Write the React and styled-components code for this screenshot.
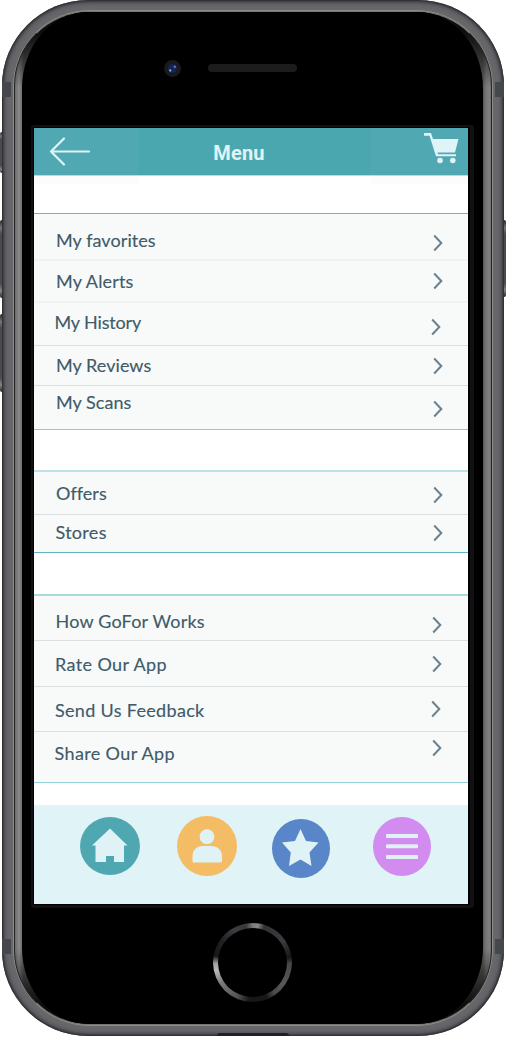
import React from "react";
import styled, { createGlobalStyle } from "styled-components";

const Global = createGlobalStyle`
  * { box-sizing: border-box; }
  body { margin: 0; background: #fff; font-family: Lato, "Liberation Sans", sans-serif; }
`;

const Stage = styled.main`
  position: relative;
  width: 508px;
  height: 1044px;
  overflow: hidden;
`;

const Shell = styled.div`
  position: relative;
  width: 502px;
  height: 1036px;
  margin-left: 1.5px;
  padding: 9px 9.5px 9.5px 10px;
  border-radius: 86px;
  background: #68686c;
  box-shadow: inset 0 0 3px 1px #222326, inset 0 0 7px 1px #3c3d40;
`;

const Rim = styled.div`
  height: 100%;
  padding: 0.5px 1px;
  border-radius: 78px;
  background: #8b8b88;
  border: 1px solid #68686a;
`;

const Edge = styled.div`
  height: 100%;
  padding: 0.5px 8px 0 7.5px;
  border-radius: 75px;
  border: 1px solid #252525;
  border-top-color: #77776f;
  border-bottom-color: #77776f;
  background: linear-gradient(rgba(0, 0, 0, 0.85) 20px, transparent 75px, transparent calc(100% - 75px), rgba(0, 0, 0, 0.85) calc(100% - 20px)),
    linear-gradient(90deg, #6a6a6a, #8a8a8a 4px, #5a5a5a 9px, #5a5a5a 468px, #777 471px, #808080 475px, #666);
`;

const Face = styled.div`
  display: flex;
  flex-direction: column;
  align-items: center;
  height: 100%;
  border-radius: 66px / 76px;
  background: #000;
`;

const Sensors = styled.div`
  display: flex;
  align-items: center;
  width: 100%;
  height: 113px;
  padding: 0 0 1px 142px;
  gap: 27px;
`;

const Camera = styled.div`
  width: 17px;
  height: 17px;
  border: 4px solid #1a1a1c;
  border-radius: 50%;
  background: radial-gradient(circle at 25% 72%, #8ea4c8 0 0.8px, transparent 1.5px),
    radial-gradient(circle at 75% 30%, #5f79b8 0 0.8px, transparent 1.5px), #14245a;
`;

const Speaker = styled.div`
  width: 89px;
  height: 8px;
  border-radius: 4px;
  background: #1c1c1c;
`;

const Bezel = styled.div`
  flex: none;
  width: 443px;
  height: 783px;
  padding: 1px 2px 1px 1px;
  border: solid #111113;
  border-width: 2px 4px 3px 2px;
  border-radius: 3px;
  background: #000;
`;

const Screen = styled.div`
  display: flex;
  flex-direction: column;
  width: 434px;
  height: 776px;
  background: #fff;
`;

const Header = styled.header`
  display: grid;
  grid-template-columns: 104px 232px 1fr;
  grid-template-rows: 47px;
  height: 48px;
  border-bottom: 1px solid #b6dde0;
  background: #4ba7af;
`;

const HeaderSide = styled.div`
  display: flex;
  background: #50a9b2;
  padding: ${(p) => p.$pad};
  box-shadow: 0 1px 0 #b6dde0, 0 9px 0 #fcfcfc;
`;

const Title = styled.h1`
  margin: 0;
  padding-right: 30px;
  font: 700 20px/50px Roboto, "Liberation Sans", sans-serif;
  letter-spacing: 0.2px;
  text-align: center;
  color: #e0f3f7;
`;

const List = styled.nav`
  margin-top: ${(p) => p.$gap}px;
  border-top: ${(p) => p.$top};
  border-bottom: 1px solid ${(p) => p.$bottom};
  background: #f8faf9;
`;

const Row = styled.a`
  display: flex;
  justify-content: space-between;
  align-items: flex-start;
  height: ${(p) => p.$h}px;
  padding: 0 ${(p) => p.$right}px 0 ${(p) => p.$left}px;
  border-bottom: ${(p) => p.$line || "0"};
  color: #405a69;
`;

const Label = styled.span`
  margin-top: ${(p) => p.$top}px;
  font-size: 18px;
  line-height: 20px;
  letter-spacing: ${(p) => p.$track}px;
  -webkit-text-stroke: 0.15px currentColor;
  white-space: nowrap;
`;

const Chevron = styled.svg`
  width: 10px;
  height: 18px;
  margin-top: ${(p) => p.$top}px;
  fill: none;
  stroke: #6b808d;
  stroke-width: 2;
`;

const TabBar = styled.footer`
  display: flex;
  align-items: flex-start;
  height: 99px;
  margin-top: auto;
  padding-left: 46px;
  background: #e0f3f7;
`;

const Tab = styled.div`
  width: ${(p) => p.$w}px;
  height: ${(p) => p.$h}px;
  margin: ${(p) => p.$top}px ${(p) => p.$after}px 0 0;
  border-radius: 50%;
  background: ${(p) => p.$color};
  svg { display: block; width: 100%; height: 100%; fill: #dff2f6; }
`;

const HomeButton = styled.div`
  width: 79px;
  height: 79px;
  margin-top: 15px;
  padding: 5px;
  border-radius: 50%;
  background: conic-gradient(#77777a 0deg, #8a8a8c 8deg, #333337 18deg, #3b3b40 55deg, #17171b 82deg, #48484b 92deg, #58585a 125deg, #4a4a4c 145deg, #17171a 158deg, #17171b 185deg, #555558 205deg, #77777a 235deg, #b8b8ba 258deg, #a5a5a7 268deg, #17171a 280deg, #202024 305deg, #3c3c40 330deg, #39393c 350deg, #77777a 360deg);
`;

const HomeFace = styled.div`
  height: 100%;
  border-radius: 50%;
  background: #000;
`;

const SideKey = styled.div`
  position: absolute;
  left: ${(p) => p.$x}px;
  top: ${(p) => p.$y}px;
  width: ${(p) => p.$w}px;
  height: ${(p) => p.$h}px;
  border-radius: 2px;
  background: linear-gradient(#222, #77777b 10%, #4b4b4f 18%, #4b4b4f 82%, #85858a 91%, #222);
`;

const Antenna = styled.div`
  position: absolute;
  ${(p) => p.$side}: 0;
  top: ${(p) => p.$y}px;
  width: 9px;
  height: 15px;
  background: #44474c;
`;

const Port = styled.div`
  position: absolute;
  left: 215px;
  bottom: 0;
  width: 72px;
  height: 3px;
  border-radius: 8px 8px 0 0;
  background: #202022;
`;

const faint = "2px solid #f1f3f3";
const grey = "1px solid #dcdfdf";

const sections = [
  {
    gap: 37, top: "1px solid #68b8bc", bottom: "#8ccbd1",
    rows: [
      { text: "My favorites", h: 47, left: 22, y: 16, cy: 20, right: 25.2, line: faint, track: 0.08 },
      { text: "My Alerts", h: 42, left: 22, y: 10, cy: 11, right: 25.2, line: faint, track: 0.17 },
      { text: "My History", h: 43, left: 20.5, y: 9, cy: 15, right: 26.7, line: grey, track: -0.15 },
      { text: "My Reviews", h: 40, left: 22, y: 9, cy: 11, right: 25.2, line: grey, track: 0.05 },
      { text: "My Scans", h: 43, left: 22, y: 6, cy: 13.8, right: 25.2, track: 0.05 },
    ],
  },
  {
    gap: 40, top: "2px solid #bee2e4", bottom: "#5cb5c0",
    rows: [
      { text: "Offers", h: 43, left: 22, y: 11, cy: 14, right: 25.2, line: grey, track: 0.05 },
      { text: "Stores", h: 37, left: 21.5, y: 7, cy: 9, right: 25.2, track: 0.3 },
    ],
  },
  {
    gap: 41, top: "2px solid #a9dbda", bottom: "#91d1d7",
    rows: [
      { text: "How GoFor Works", h: 45, left: 21.5, y: 15, cy: 20, right: 26, line: grey, track: 0.2 },
      { text: "Rate Our App", h: 46, left: 21, y: 13, cy: 13.5, right: 26, line: grey, track: 0.38 },
      { text: "Send Us Feedback", h: 45, left: 21, y: 13, cy: 13, right: 27, line: grey, track: 0.32 },
      { text: "Share Our App", h: 50, left: 20.5, y: 11, cy: 7, right: 26, track: 0.37 },
    ],
  },
];

export default function App() {
  return (
    <Stage>
      <Global />
      <SideKey $x={0} $y={132} $w={4} $h={41} />
      <SideKey $x={0} $y={220} $w={5} $h={78} />
      <SideKey $x={0} $y={314} $w={5} $h={78} />
      <SideKey $x={501} $y={220} $w={5} $h={77} />
      <Shell>
        <Antenna $side="left" $y={82} />
        <Antenna $side="right" $y={82} />
        <Antenna $side="left" $y={939} />
        <Antenna $side="right" $y={939} />
        <Port />
        <Rim>
          <Edge>
            <Face>
              <Sensors>
                <Camera />
                <Speaker />
              </Sensors>
              <Bezel>
                <Screen>
                  <Header>
                    <HeaderSide $pad="8px 0 0 15px">
                      <svg width="44" height="32" viewBox="0 0 44 32" fill="none" stroke="#e0f3f7" strokeWidth="2.2" strokeLinecap="round" strokeLinejoin="round">
                        <path d="M15 2.5 L2 15.5 L15 28.5 M2 15.5 H40" />
                      </svg>
                    </HeaderSide>
                    <Title>Menu</Title>
                    <HeaderSide $pad="4px 0 0 53px">
                      <svg width="37" height="33" viewBox="0 0 37 33" fill="#e0f3f7">
                        <path d="M1 1 H8 L10 7 H35.5 L32 20.5 H14.5 L15 22.2 H33 V24.2 H13 L6.5 3.8 H1 Z" />
                        <circle cx="17" cy="28.5" r="2.8" />
                        <circle cx="29.8" cy="28.5" r="2.8" />
                      </svg>
                    </HeaderSide>
                  </Header>
                  {sections.map((s) => (
                    <List key={s.gap} $gap={s.gap} $top={s.top} $bottom={s.bottom}>
                      {s.rows.map((r) => (
                        <Row key={r.text} $h={r.h} $left={r.left} $right={r.right} $line={r.line}>
                          <Label $top={r.y} $track={r.track}>{r.text}</Label>
                          <Chevron $top={r.cy} viewBox="0 0 10 18">
                            <path d="M1.2 1.5 L8.3 9 L1.2 16.5" />
                          </Chevron>
                        </Row>
                      ))}
                    </List>
                  ))}
                  <TabBar>
                    <Tab $w={60} $h={58} $top={12} $after={37} $color="#4fa8b1">
                      <svg viewBox="0 0 60 58">
                        <path d="M30 11.5 L47.5 28.5 H44 V45 H34 V39 H26 V45 H15.5 V28.5 H12 Z" />
                      </svg>
                    </Tab>
                    <Tab $w={60} $h={60} $top={11.3} $after={35} $color="#f3bc65">
                      <svg viewBox="0 0 60 60">
                        <circle cx="30" cy="20.7" r="7.4" />
                        <path d="M15.5 45 V40 C15.5 34 20 30 25.5 30 H34.5 C40 30 45 34 45 40 V45 Q45 46.5 43.5 46.5 H17 Q15.5 46.5 15.5 45 Z" />
                      </svg>
                    </Tab>
                    <Tab $w={58} $h={59} $top={14} $after={43} $color="#5986c9">
                      <svg viewBox="0 0 58 59">
                        <path d="M28.5 10 L34 22 L46.5 23.5 L37.5 33.5 L39.5 47 L28.5 40.5 L17 47 L18.8 33.5 L10 23.5 L23 22 Z" />
                      </svg>
                    </Tab>
                    <Tab $w={58} $h={59} $top={12} $after={0} $color="#d28bee">
                      <svg viewBox="0 0 58 59">
                        <rect x="13" y="17" width="32" height="4" rx="1" />
                        <rect x="13" y="27.3" width="32" height="4" rx="1" />
                        <rect x="13" y="38" width="32" height="4" rx="1" />
                      </svg>
                    </Tab>
                  </TabBar>
                </Screen>
              </Bezel>
              <HomeButton>
                <HomeFace />
              </HomeButton>
            </Face>
          </Edge>
        </Rim>
      </Shell>
    </Stage>
  );
}
